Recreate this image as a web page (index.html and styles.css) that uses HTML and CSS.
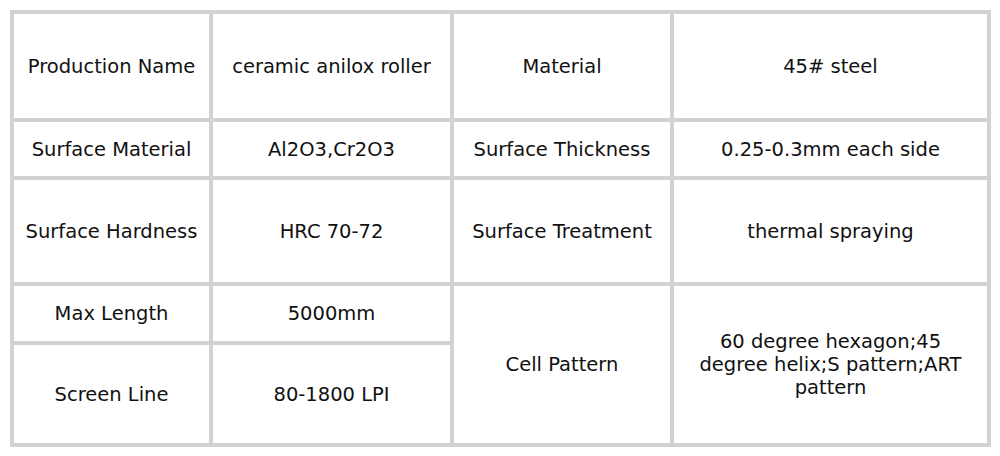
FILE: index.html
```html
<!DOCTYPE html>
<html lang="en">
<head>
<meta charset="utf-8">
<title>Ceramic anilox roller specifications</title>
<link rel="stylesheet" href="styles.css">
</head>
<body>
<table class="spec">
  <colgroup>
    <col class="c1"><col class="c2"><col class="c3"><col class="c4">
  </colgroup>
  <tbody>
    <tr class="r1">
      <td>Production Name</td>
      <td>ceramic anilox roller</td>
      <td>Material</td>
      <td>45# steel</td>
    </tr>
    <tr class="r2">
      <td>Surface Material</td>
      <td>Al2O3,Cr2O3</td>
      <td>Surface Thickness</td>
      <td>0.25-0.3mm each side</td>
    </tr>
    <tr class="r3">
      <td>Surface Hardness</td>
      <td>HRC 70-72</td>
      <td>Surface Treatment</td>
      <td>thermal spraying</td>
    </tr>
    <tr class="r4">
      <td>Max Length</td>
      <td>5000mm</td>
      <td rowspan="2">Cell Pattern</td>
      <td rowspan="2" class="multi">60 degree hexagon;45 degree helix;S pattern;ART pattern</td>
    </tr>
    <tr class="r5">
      <td>Screen Line</td>
      <td>80-1800 LPI</td>
    </tr>
  </tbody>
</table>
</body>
</html>
```
FILE: styles.css
```css
html, body {
  margin: 0;
  padding: 0;
  background: #ffffff;
}
body {
  padding: 10px;
  font-family: "DejaVu Sans", Verdana, sans-serif;
  font-size: 19.5px;
  color: #111111;
}
.spec {
  border-collapse: separate;
  border-spacing: 0;
  table-layout: fixed;
  width: 981px;
  border-top: 4px solid #d2d2d2;
  border-left: 4px solid #d2d2d2;
}
.c1 { width: 199px; }
.c2 { width: 241px; }
.c3 { width: 220px; }
.c4 { width: 317px; }
.spec td {
  box-sizing: border-box;
  border-right: 4px solid #d2d2d2;
  border-bottom: 4px solid #d2d2d2;
  padding: 0 6px;
  text-align: center;
  vertical-align: middle;
  line-height: 23px;
}
.r1 td { height: 108px; }
.r2 td { height: 58px; }
.r3 td { height: 106px; }
.r4 td { height: 59px; }
.r5 td { height: 102px; }
.spec td.multi { padding: 0 15px; }
```
